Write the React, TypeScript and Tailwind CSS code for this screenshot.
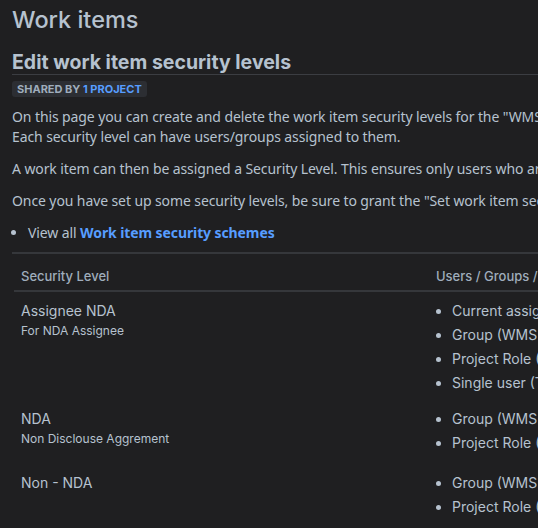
import React from "react";

const rows = [
  {
    name: "Assignee NDA",
    desc: "For NDA Assignee",
    items: ["Current assignee", "Group (WMS Team)", "Project Role (Administrators)", "Single user (Test User)"],
    pb: "pb-[5px]",
  },
  {
    name: "NDA",
    desc: "Non Disclouse Aggrement",
    items: ["Group (WMS Team)", "Project Role (Developers)"],
    pb: "pb-[9px]",
  },
  {
    name: "Non - NDA",
    desc: "",
    items: ["Group (WMS Team)", "Project Role (Users)"],
    pb: "pb-[8px]",
  },
];

export default function App() {
  return (
    <div className="w-[538px] h-[528px] overflow-hidden bg-[#1f1f21] text-[#b6c2cf]" style={{ fontFamily: "Inter, 'Noto Sans', sans-serif" }}>
      <div className="pl-3 w-[900px]">
        <h1 className="text-[23.5px] leading-[28px] pt-[6px] font-medium text-[#b6c2cf]">Work items</h1>
        <h2 className="mt-[17px] text-[19.5px] leading-[22px] font-bold text-[#b6c2cf] border-b border-[#3b3d42] pb-[1px] w-[526px] whitespace-nowrap">
          Edit work item security levels
        </h2>
        <div className="mt-[2px] inline-flex items-center h-[16px] px-[5px] rounded-[3px] bg-[#2c2e33] text-[11px] font-bold uppercase text-[#9fadbc]">
          Shared by&nbsp;<span className="text-[#579dff]">1 project</span>
        </div>
        <div className="text-[14px] leading-[20px] mt-[8px] whitespace-nowrap tracking-[-0.1px]" style={{ fontFamily: "'Noto Sans', sans-serif" }}>
          <p>
            On this page you can create and delete the work item security levels for the "WMS Team" scheme.
            <br />
            Each security level can have users/groups assigned to them.
          </p>
          <p className="mt-[12px]">
            A work item can then be assigned a Security Level. This ensures only users who are assigned to this security level may view the work item.
          </p>
          <p className="mt-[12px]">
            Once you have set up some security levels, be sure to grant the "Set work item security" permission to relevant users.
          </p>
          <ul className="mt-[12px] list-disc pl-[16px]">
            <li>
              View all <span className="font-bold text-[#579dff]">Work item security schemes</span>
            </li>
          </ul>
        </div>
        <div className="mt-[9px] w-[526px] border-t-2 border-[#35373b]" />
        <table className="mt-[14px] ml-[2px] w-[900px] border-collapse">
          <thead>
            <tr className="border-b-2 border-[#35373b] text-left">
              <th className="w-[422px] pl-[7px] pb-[6px] text-[13px] leading-[16px] font-medium text-[#9fadbc]">Security Level</th>
              <th className="pl-0 pb-[6px] text-[13px] leading-[16px] font-medium text-[#9fadbc] whitespace-nowrap">Users / Groups / Project Roles</th>
            </tr>
          </thead>
          <tbody>
            {rows.map((r, i) => (
              <tr key={i} className="align-top">
                <td className={`pl-[7px] pt-[9px] ${r.pb}`}>
                  <div className="text-[14px] leading-[20px]">{r.name}</div>
                  {r.desc && <div className="text-[12px] leading-[20px]">{r.desc}</div>}
                </td>
                <td className={`pt-[9px] ${r.pb}`}>
                  <ul className="list-disc pl-[16px] text-[14px] leading-[24px] -mt-[2px] whitespace-nowrap">
                    {r.items.map((it, j) => (
                      <li key={j}>{it}</li>
                    ))}
                  </ul>
                </td>
              </tr>
            ))}
          </tbody>
        </table>
      </div>
    </div>
  );
}
